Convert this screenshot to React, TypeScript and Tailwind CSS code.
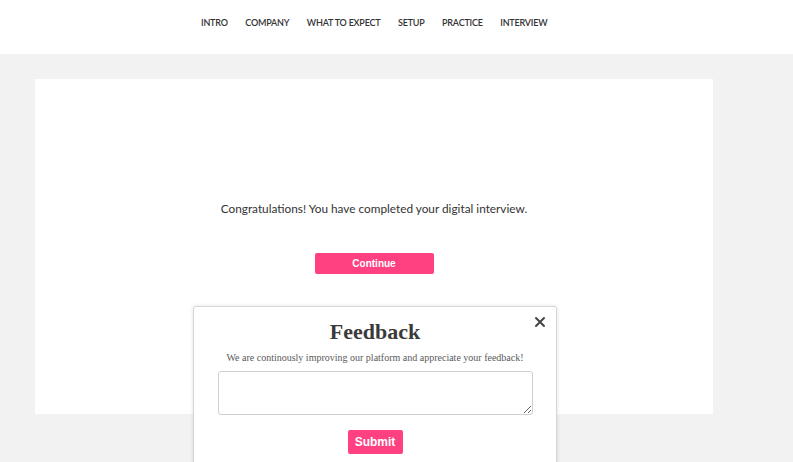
import React from "react";

export default function App() {
  const nav = ["INTRO", "COMPANY", "WHAT TO EXPECT", "SETUP", "PRACTICE", "INTERVIEW"];
  return (
    <div className="relative w-full h-[462px] overflow-hidden bg-[#f2f2f2]">
      <header className="h-[54px] bg-white flex items-start pt-[17px] pl-[201px]">
        <nav className="flex gap-[17.5px] text-[9px] font-semibold text-[#333] tracking-[-0.2px] leading-[12px]" style={{ fontFamily: "Lato, 'Open Sans', sans-serif" }}>
          {nav.map((n) => (
            <span key={n}>{n}</span>
          ))}
        </nav>
      </header>
      <main className="pt-[25px] pl-[35px]">
        <div className="w-[678px] h-[335px] bg-white flex flex-col items-center pt-[121px]">
          <p className="text-[11.8px] text-[#333] leading-[18px]" style={{ fontFamily: "Lato, 'Open Sans', sans-serif" }}>
            Congratulations! You have completed your digital interview.
          </p>
          <button className="mt-[35px] w-[119px] h-[21px] rounded-[2px] bg-[#ff4081] text-white text-[10px] font-bold" style={{ fontFamily: "'Liberation Sans', Arial, sans-serif" }}>
            Continue
          </button>
        </div>
      </main>
      <div className="absolute left-[193px] top-[306px] w-[364px] h-[180px] bg-white border border-[#d6d6d6] rounded-[3px] shadow-[0_0_4px_rgba(0,0,0,0.12)] flex flex-col items-center" style={{ fontFamily: "'Liberation Serif', 'Times New Roman', serif" }}>
        <button className="absolute right-[10px] top-[6px] text-[#444]">
          <svg width="12" height="12" viewBox="0 0 12 12" className="mt-[3px]">
            <path d="M2 2 L10 10 M10 2 L2 10" stroke="#444" strokeWidth="2" strokeLinecap="round" />
          </svg>
        </button>
        <h2 className="mt-[11px] text-[22px] font-bold text-[#3a3a3a] leading-[28px]">Feedback</h2>
        <p className="mt-[5px] text-[10px] text-[#5a5a5a] leading-[14px]">
          We are continously improving our platform and appreciate your feedback!
        </p>
        <textarea className="mt-[6px] w-[315px] h-[44px] border border-[#cfcfcf] rounded-[3px] resize-y outline-none" />
        <button className="mt-[15px] w-[55px] h-[24px] rounded-[2px] bg-[#ff4081] text-white text-[12px] font-bold" style={{ fontFamily: "'Liberation Sans', Arial, sans-serif" }}>
          Submit
        </button>
      </div>
    </div>
  );
}
